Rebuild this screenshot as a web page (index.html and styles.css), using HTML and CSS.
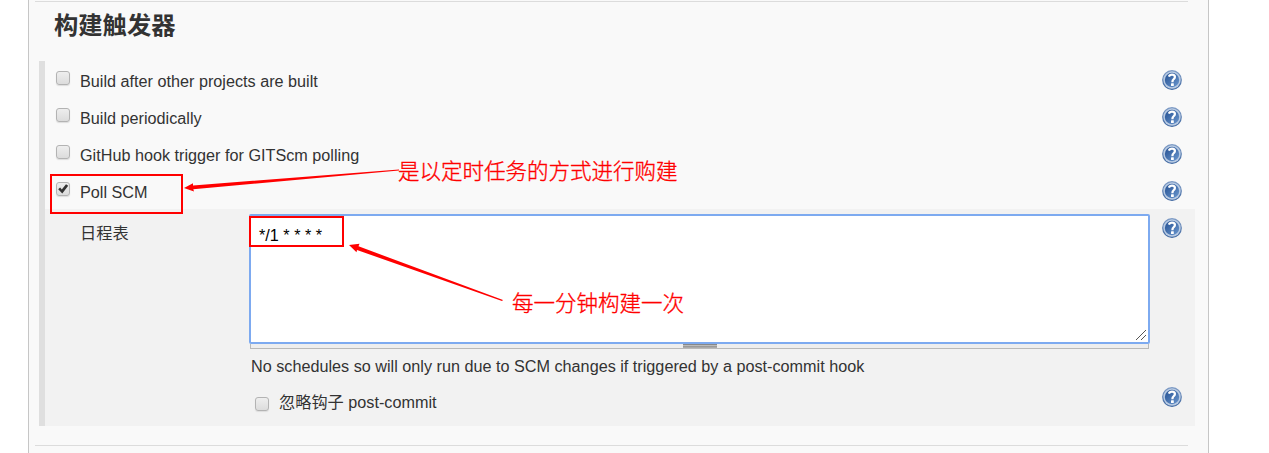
FILE: index.html
```html
<!DOCTYPE html>
<html lang="zh-CN">
<head>
<meta charset="utf-8">
<title>构建触发器</title>
<link rel="stylesheet" href="styles.css">
</head>
<body>
<svg class="defs" width="0" height="0" aria-hidden="true">
  <defs>
    <linearGradient id="disc" x1="0" y1="0" x2="1" y2="1"><stop offset="0" stop-color="#234f91"/><stop offset="1" stop-color="#6c98cf"/></linearGradient>
    <linearGradient id="rim" x1="0" y1="0" x2="0" y2="1"><stop offset="0" stop-color="#7f9cc6"/><stop offset="1" stop-color="#3c659f"/></linearGradient>
    <symbol id="help" viewBox="0 0 20 20">
      <circle cx="10" cy="10" r="9.9" fill="url(#rim)"/>
      <circle cx="10" cy="10" r="8.7" fill="#b9cbe3"/>
      <circle cx="10" cy="10" r="7.2" fill="url(#disc)"/>
      <path d="M6.9 6.6Q7.6 4.6 10 4.6Q12.9 4.6 12.9 7.1Q12.9 8.5 11.5 9.4Q10.4 10.1 10.4 12.2" fill="none" stroke="#fff" stroke-width="2.3"/>
      <rect x="9" y="13.3" width="2.8" height="2.7" rx=".5" fill="#fff"/>
    </symbol>
  </defs>
</svg>
<main class="panel">
  <section class="section">
    <h2 class="title">构建触发器</h2>
    <div class="group">
      <div class="row"><span class="check"></span><label class="label">Build after other projects are built</label><svg class="help"><use href="#help"/></svg></div>
      <div class="row"><span class="check"></span><label class="label">Build periodically</label><svg class="help"><use href="#help"/></svg></div>
      <div class="row"><span class="check"></span><label class="label">GitHub hook trigger for GITScm polling</label><svg class="help"><use href="#help"/></svg></div>
      <div class="row"><span class="check"><svg class="tick" viewBox="0 0 14 14"><path d="M2.2 7.2L4.1 5.6L5.8 7.6L10 2.2L12.2 3.7L6.3 11.4Z" fill="#333"/></svg></span><label class="label">Poll SCM</label><svg class="help"><use href="#help"/></svg></div>
      <div class="nested">
        <div class="name">日程表</div>
        <div class="field">
          <div class="textarea">*/1 * * * *<svg class="resize" viewBox="0 0 12 12"><path d="M1 11L11 1M6 11L11 6" stroke="#555" fill="none"/></svg></div>
          <div class="grip"><span class="handle"></span></div>
          <p class="note">No schedules so will only run due to SCM changes if triggered by a post-commit hook</p>
          <div class="option"><span class="check"></span><label class="option-label">忽略钩子 post-commit</label></div>
        </div>
        <div class="helps"><svg class="help"><use href="#help"/></svg><svg class="help"><use href="#help"/></svg></div>
      </div>
    </div>
  </section>
</main>
<div class="mark mark-poll"></div>
<div class="mark mark-cron"></div>
<svg class="arrows" viewBox="0 0 1269 453">
  <path d="M184 188L193 183.3L193 185.4L399 169.5L399 170.5L193.3 189.2L194 191.5Z" fill="red"/>
  <path d="M349 245L359.5 243.8L358.5 246.3L503 300L502 301L357 250L356.5 252.3Z" fill="red"/>
</svg>
<div class="remark remark-poll">是以定时任务的方式进行购建</div>
<div class="remark remark-cron">每一分钟构建一次</div>
</body>
</html>
```
FILE: styles.css
```css
* { box-sizing: border-box; }
body {
  margin: 0;
  height: 453px;
  overflow: hidden;
  background: #fff;
  color: #333;
  font: 16.22px/20px "Liberation Sans", "Noto Sans CJK SC", sans-serif;
}
.defs { position: absolute; }
.panel {
  width: 1181px;
  height: 453px;
  margin-left: 28px;
  padding: 1px 13px 0 6px;
  background: #f9f9f9;
  border: solid #c6c6c6;
  border-width: 0 1px;
}
.section {
  width: 1153px;
  height: 445px;
  border: solid #dcdcdc;
  border-width: 1px 0;
}
.title {
  margin: 0;
  padding: 8px 0 0 19px;
  height: 59px;
  font-size: 24.3px;
  line-height: 32px;
}
.group {
  width: 1156px;
  height: 365px;
  margin-left: 4px;
  border-left: 6px solid #dfdfdf;
}
.row {
  display: grid;
  grid-template-columns: 35px 1fr 20px;
  height: 37px;
  padding: 9px 13px 0 0;
}
.check {
  display: block;
  width: 14px;
  height: 14px;
  margin: 1px 0 0 11px;
  border: 1px solid #b3b3b3;
  border-radius: 3px;
  background: linear-gradient(#eee, #dcdcdc);
  box-shadow: 0 1px 1px #ddd;
}
.tick { display: block; width: 14px; height: 14px; margin: -1px; }
.label { line-height: 22px; }
.help { display: block; width: 20px; height: 20px; }
.nested {
  display: grid;
  grid-template-columns: 204px 901px 1fr;
  height: 217px;
  background: #f2f2f2;
}
.name { padding: 14px 0 0 35px; }
.field { padding-top: 5px; }
.textarea {
  position: relative;
  height: 130px;
  padding: 9px 8px;
  border: 2px solid #7daaf0;
  border-radius: 2px;
  background: #fff;
  color: #000;
}
.resize { position: absolute; right: 1px; bottom: 1px; width: 12px; height: 12px; }
.grip {
  height: 5px;
  margin: 0 1px;
  border: solid #b9b9b9;
  border-width: 0 1px 1px;
  background: #eee;
}
.handle {
  display: block;
  width: 34px;
  height: 4px;
  margin-left: 432px;
  border-top: 1px solid #888;
  background: linear-gradient(#bbb 33%, #999 33% 66%, #aaa 66%);
}
.note { margin: 7px 0 0 2px; }
.option { display: flex; margin-top: 16px; }
.option .check { margin: 5px 0 0 6px; }
.option-label { margin-left: 10px; }
.helps { display: flex; flex-direction: column; gap: 149px; padding: 9px 0 0 12px; }
.mark { position: absolute; border: 2px solid #f00; }
.mark-poll { left: 50px; top: 174px; width: 133px; height: 40px; }
.mark-cron { left: 249px; top: 216px; width: 95px; height: 31px; }
.arrows { position: absolute; inset: 0; width: 1269px; height: 453px; }
.remark {
  position: absolute;
  color: #f00;
  font: 300 21.5px/28px "Noto Sans CJK SC", sans-serif;
  -webkit-text-stroke: .35px #f00;
  white-space: nowrap;
}
.remark-poll { left: 398px; top: 156px; }
.remark-cron { left: 512px; top: 288px; }
```
